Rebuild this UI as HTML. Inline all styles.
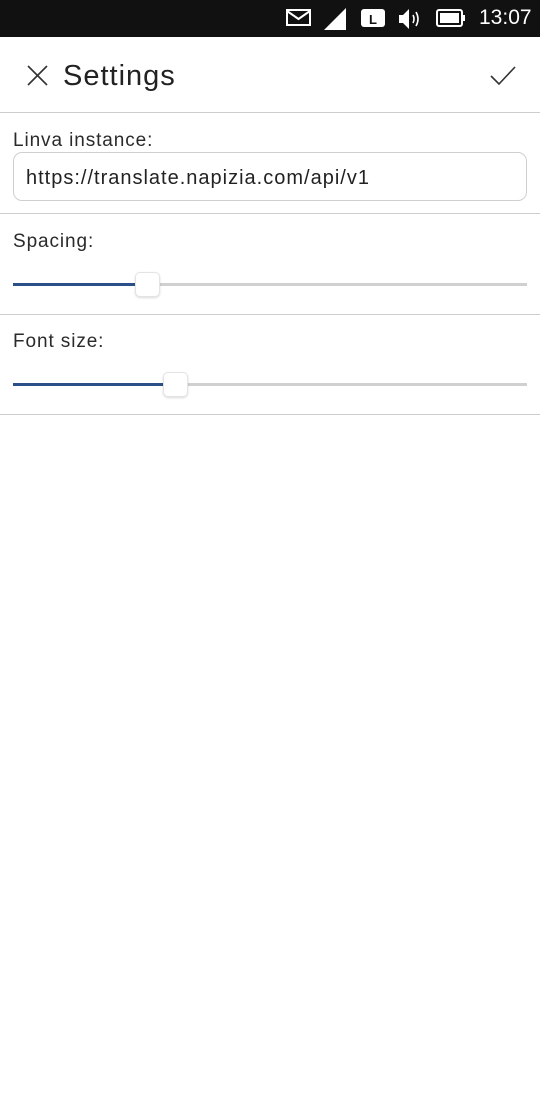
<!DOCTYPE html>
<html><head><style>
body{margin:0;width:540px;height:1110px;background:#fff;font-family:"Liberation Sans",sans-serif;color:#222;position:relative;overflow:hidden}
.a{position:absolute}
.sb{left:0;top:0;width:540px;height:37px;background:#111}
.line{left:0;width:540px;height:1px;background:#cdcdcd}
.lbl{font-size:19px;color:#2a2a2a;left:13px;letter-spacing:0.9px}
.track{left:13px;width:514px;height:3px;background:#d0d0d0}
.fill{left:13px;height:3px;background:#2b5089}
.thumb{width:23px;height:23px;background:#fff;border:1px solid #e4e4e4;border-radius:5px;box-shadow:0 1px 2px rgba(0,0,0,.15)}
</style></head><body>
<div class="a sb"></div>
<svg class="a" style="left:286px;top:8px" width="26" height="20" viewBox="0 0 26 20"><rect x="1" y="2" width="23" height="15" fill="none" stroke="#fff" stroke-width="2"/><path d="M1 3 L12.5 11 L24 3" fill="none" stroke="#fff" stroke-width="2"/></svg>
<svg class="a" style="left:323px;top:7px" width="24" height="24"><path d="M1 23 L23 1 L23 23 Z" fill="#fff"/></svg>
<svg class="a" style="left:361px;top:9px" width="24" height="20"><rect x="0" y="0" width="24" height="18" rx="3" fill="#fff"/><text x="8" y="15" font-size="13" font-weight="bold" fill="#111" font-family="Liberation Sans">L</text></svg>
<svg class="a" style="left:398px;top:8px" width="26" height="22"><path d="M1 7 H5 L11 1 V21 L5 15 H1 Z" fill="#fff"/><path d="M15 7 Q17 11 15 15 M18 4 Q22 11 18 18" fill="none" stroke="#fff" stroke-width="1.6"/></svg>
<svg class="a" style="left:436px;top:9px" width="30" height="20"><rect x="1" y="1" width="25" height="16" rx="2" fill="none" stroke="#fff" stroke-width="2"/><rect x="4" y="4" width="19" height="10" fill="#fff"/><rect x="27" y="6" width="2" height="6" fill="#fff"/></svg>
<div class="a" style="left:479px;top:6px;color:#fff;font-size:21px">13:07</div>
<svg class="a" style="left:27px;top:65px" width="21" height="21"><path d="M1 1 L20 20 M20 1 L1 20" stroke="#333" stroke-width="1.6"/></svg>
<div class="a" style="left:63px;top:60px;font-size:29px;color:#222;letter-spacing:1px">Settings</div>
<svg class="a" style="left:490px;top:66px" width="26" height="20"><path d="M1 10 L9 18 L25 1" fill="none" stroke="#333" stroke-width="1.6"/></svg>
<div class="a line" style="top:112px"></div>
<div class="a lbl" style="top:130px">Linva instance:</div>
<div class="a" style="left:13px;top:152px;width:512px;height:47px;border:1px solid #cfcfcf;border-radius:9px"></div>
<div class="a" style="left:26px;top:167px;font-size:20px;color:#222;letter-spacing:1px">https://translate.napizia.com/api/v1</div>
<div class="a line" style="top:213px"></div>
<div class="a lbl" style="top:231px">Spacing:</div>
<div class="a track" style="top:283px"></div>
<div class="a fill" style="top:283px;width:124px"></div>
<div class="a thumb" style="left:135px;top:272px"></div>
<div class="a line" style="top:314px"></div>
<div class="a lbl" style="top:331px">Font size:</div>
<div class="a track" style="top:383px"></div>
<div class="a fill" style="top:383px;width:151px"></div>
<div class="a thumb" style="left:163px;top:372px"></div>
<div class="a line" style="top:414px"></div>
</body></html>
